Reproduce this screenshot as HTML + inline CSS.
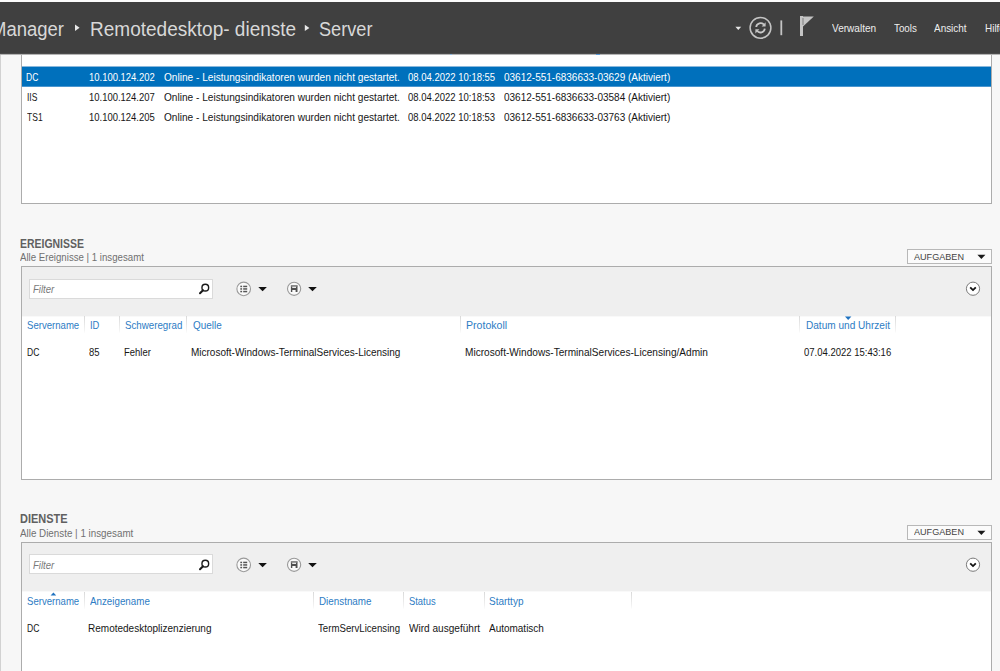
<!DOCTYPE html>
<html><head><meta charset="utf-8">
<style>
*{margin:0;padding:0;box-sizing:border-box}
html,body{width:1000px;height:671px;overflow:hidden;background:#f7f7f7;font-family:"Liberation Sans",sans-serif;position:relative}
.b{position:absolute}
.t{position:absolute;white-space:nowrap;transform-origin:0 0}
.sep{position:absolute;width:1px;background:linear-gradient(#d9d9d9,#f2f2f2 80%,#fdfdfd)}
</style></head><body>
<!-- left line -->
<div class="b" style="left:0;top:0;width:1px;height:671px;background:#d2d2d2"></div>

<!-- panel 1 -->
<div class="b" style="left:21px;top:30px;width:971px;height:174px;background:#fff;border:1px solid #acacac"></div>
<div class="b" style="left:22px;top:66px;width:969px;height:21px;background:linear-gradient(#8ab8dc 0,#8ab8dc 1px,#0070bc 1px,#0070bc 20px,#4a96cf 20px)"></div>

<!-- panel 2 -->
<div class="b" style="left:907px;top:249px;width:85px;height:15px;background:#fbfbfb;border:1px solid #b8b8b8"></div>
<div class="b" style="left:21px;top:266px;width:971px;height:214px;background:#fff;border:1px solid #acacac"></div>
<div class="b" style="left:22px;top:267px;width:969px;height:50px;background:linear-gradient(#efefef 0,#efefef 49px,#f9f9f9 49px)"></div>
<div class="b" style="left:29px;top:279px;width:184px;height:20px;background:#fff;border:1px solid #dadada"></div>

<!-- panel 3 -->
<div class="b" style="left:907px;top:525px;width:85px;height:15px;background:#fbfbfb;border:1px solid #b8b8b8"></div>
<div class="b" style="left:21px;top:542px;width:971px;height:140px;background:#fff;border:1px solid #acacac"></div>
<div class="b" style="left:22px;top:543px;width:969px;height:49px;background:linear-gradient(#efefef 0,#efefef 48px,#f9f9f9 48px)"></div>
<div class="b" style="left:29px;top:554px;width:184px;height:20px;background:#fff;border:1px solid #dadada"></div>

<!-- header separators -->
<div class="sep" style="left:84px;top:316px;height:17px"></div>
<div class="sep" style="left:119px;top:316px;height:17px"></div>
<div class="sep" style="left:186px;top:316px;height:17px"></div>
<div class="sep" style="left:460px;top:316px;height:17px"></div>
<div class="sep" style="left:799px;top:316px;height:17px"></div>
<div class="sep" style="left:895px;top:316px;height:17px"></div>
<div class="sep" style="left:84px;top:592px;height:17px"></div>
<div class="sep" style="left:313px;top:592px;height:17px"></div>
<div class="sep" style="left:403px;top:592px;height:17px"></div>
<div class="sep" style="left:484px;top:592px;height:17px"></div>
<div class="sep" style="left:631px;top:592px;height:17px"></div>

<!-- icons -->
<svg class="b" style="left:0;top:0" width="1000" height="671" viewBox="0 0 1000 671">
  <!-- toolbar icons panel 2 & 3 -->
  <g id="tbicons">
    <!-- search -->
    <circle cx="205.3" cy="287.65" r="3.35" fill="none" stroke="#1a1a1a" stroke-width="1.4"/>
    <line x1="203" y1="290.2" x2="200" y2="293.2" stroke="#1a1a1a" stroke-width="2" stroke-linecap="round"/>
    <!-- list circle -->
    <circle cx="243.7" cy="288.9" r="6.8" fill="#fafafa" stroke="#9a9a9a" stroke-width="1.1"/>
    <rect x="240.3" y="285.7" width="1.8" height="1.5" fill="#555"/>
    <rect x="240.3" y="288.2" width="1.8" height="1.5" fill="#555"/>
    <rect x="240.3" y="290.8" width="1.8" height="1.5" fill="#555"/>
    <rect x="243.2" y="285.7" width="4" height="1.5" fill="#555"/>
    <rect x="243.2" y="288.2" width="4" height="1.5" fill="#555"/>
    <rect x="243.2" y="290.8" width="4" height="1.5" fill="#555"/>
    <path d="M258.3 287 L266.9 287 L262.6 291.3 Z" fill="#111"/>
    <!-- save circle -->
    <circle cx="294.1" cy="288.8" r="6.6" fill="#fafafa" stroke="#9a9a9a" stroke-width="1.1"/>
    <rect x="290.9" y="285.4" width="6.6" height="6.6" fill="#505050"/><rect x="290.9" y="285.4" width="6.6" height="1.3" fill="#858585"/><rect x="292.2" y="286.7" width="3.8" height="1.2" fill="#fafafa"/><rect x="292.3" y="290" width="3.3" height="2" fill="#fafafa"/>
    <path d="M308.2 287 L316.8 287 L312.5 291.3 Z" fill="#111"/>
    <!-- expand -->
    <circle cx="973" cy="288.7" r="6.6" fill="#fff" stroke="#7a7a7a" stroke-width="1"/>
    <path d="M970.2 287.3 L973 290.1 L975.8 287.3" fill="none" stroke="#111" stroke-width="1.8"/>
    <!-- aufgaben triangle -->
    <path d="M977.4 254.7 L985.4 254.7 L981.4 258.9 Z" fill="#1a1a1a"/>
  </g>
  <use href="#tbicons" x="0" y="276"/>
  <!-- sort triangles -->
  <path d="M845 316.4 L851.4 316.4 L848.2 320 Z" fill="#1f72c0"/>
  <path d="M50.6 595.6 L56.2 595.6 L53.4 592.4 Z" fill="#1f72c0"/>
</svg>

<!-- top bar (over panel 1 top) -->
<div class="b" style="left:0;top:0;width:1000px;height:2px;background:#fcfcfc"></div>
<div class="b" style="left:0;top:2px;width:1000px;height:53px;background:linear-gradient(#404040 0,#404040 51px,#4c4c4c 51px,#4c4c4c 52px,#b4b4b4 52px)"></div>
<svg class="b" style="left:0;top:0" width="1000" height="53" viewBox="0 0 1000 53">
  <path d="M75 24.6 L79.6 27.8 L75 31 Z" fill="#e8e8e8"/>
  <path d="M304.8 24.7 L309.4 27.9 L304.8 31.1 Z" fill="#e8e8e8"/>
  <path d="M735.4 26.7 L741.2 26.7 L738.3 30 Z" fill="#e6e6e6"/>
  <circle cx="760.5" cy="27.8" r="10.4" fill="none" stroke="#c4c4c4" stroke-width="1.5"/>
  <path d="M756.2 27 A4.4 4.4 0 0 1 764 24.8" fill="none" stroke="#c8c8c8" stroke-width="1.8"/>
  <path d="M764.8 28.6 A4.4 4.4 0 0 1 757 30.8" fill="none" stroke="#c8c8c8" stroke-width="1.8"/>
  <path d="M765.6 22.2 L765.6 26.4 L761.6 26.4 Z" fill="#c4c4c4"/>
  <path d="M755.4 33.4 L755.4 29.2 L759.4 29.2 Z" fill="#c4c4c4"/>
  <rect x="780.4" y="20.4" width="1.8" height="14.8" fill="#c4c4c4"/>
  <rect x="800" y="16" width="3" height="20" fill="#c4c4c4"/>
  <path d="M803 16.5 L813.8 16.5 L803 26.5 Z" fill="#c4c4c4"/>
  <rect x="802.4" y="18" width="1.2" height="7" fill="#8a8a8a"/>
</svg>
<div class="b" style="left:450px;top:54px;width:2px;height:1px;background:#8fb8e0"></div><div class="b" style="left:596px;top:54px;width:4px;height:1px;background:#5a9ad6"></div>
<div class="t" style="left:-8.79px;top:18.00px;font-size:20px;line-height:22.344px;color:#d8d8d8;transform:scaleX(0.9250)">Manager</div>
<div class="t" style="left:89.50px;top:18.00px;font-size:20px;line-height:22.344px;color:#d8d8d8;transform:scaleX(0.9511)">Remotedesktop- dienste</div>
<div class="t" style="left:318.81px;top:18.00px;font-size:20px;line-height:22.344px;color:#d8d8d8;transform:scaleX(0.9084)">Server</div>
<div class="t" style="left:832.41px;top:22.00px;font-size:11px;line-height:12.289px;color:#eeeeee;transform:scaleX(0.9130)">Verwalten</div>
<div class="t" style="left:893.74px;top:22.00px;font-size:11px;line-height:12.289px;color:#eeeeee;transform:scaleX(0.8885)">Tools</div>
<div class="t" style="left:933.68px;top:22.00px;font-size:11px;line-height:12.289px;color:#eeeeee;transform:scaleX(0.9034)">Ansicht</div>
<div class="t" style="left:984.52px;top:22.00px;font-size:11px;line-height:12.289px;color:#eeeeee;transform:scaleX(0.9034)">Hilfe</div>
<div class="t" style="left:26.36px;top:72.00px;font-size:10.6px;line-height:11.842px;color:#ffffff;transform:scaleX(0.8037)">DC</div>
<div class="t" style="left:89.49px;top:72.00px;font-size:10.6px;line-height:11.842px;color:#ffffff;transform:scaleX(0.8930)">10.100.124.202</div>
<div class="t" style="left:163.64px;top:72.00px;font-size:10.6px;line-height:11.842px;color:#ffffff;transform:scaleX(0.9539)">Online - Leistungsindikatoren wurden nicht gestartet.</div>
<div class="t" style="left:408.48px;top:72.00px;font-size:10.6px;line-height:11.842px;color:#ffffff;transform:scaleX(0.8966)">08.04.2022 10:18:55</div>
<div class="t" style="left:504.20px;top:72.00px;font-size:10.6px;line-height:11.842px;color:#ffffff;transform:scaleX(0.9440)">03612-551-6836633-03629 (Aktiviert)</div>
<div class="t" style="left:26.76px;top:92.00px;font-size:10.6px;line-height:11.842px;color:#161616;transform:scaleX(0.8037)">IIS</div>
<div class="t" style="left:89.49px;top:92.00px;font-size:10.6px;line-height:11.842px;color:#161616;transform:scaleX(0.8930)">10.100.124.207</div>
<div class="t" style="left:163.64px;top:92.00px;font-size:10.6px;line-height:11.842px;color:#161616;transform:scaleX(0.9539)">Online - Leistungsindikatoren wurden nicht gestartet.</div>
<div class="t" style="left:408.48px;top:92.00px;font-size:10.6px;line-height:11.842px;color:#161616;transform:scaleX(0.8966)">08.04.2022 10:18:53</div>
<div class="t" style="left:504.20px;top:92.00px;font-size:10.6px;line-height:11.842px;color:#161616;transform:scaleX(0.9440)">03612-551-6836633-03584 (Aktiviert)</div>
<div class="t" style="left:26.76px;top:112.00px;font-size:10.6px;line-height:11.842px;color:#161616;transform:scaleX(0.8037)">TS1</div>
<div class="t" style="left:89.49px;top:112.00px;font-size:10.6px;line-height:11.842px;color:#161616;transform:scaleX(0.8930)">10.100.124.205</div>
<div class="t" style="left:163.64px;top:112.00px;font-size:10.6px;line-height:11.842px;color:#161616;transform:scaleX(0.9539)">Online - Leistungsindikatoren wurden nicht gestartet.</div>
<div class="t" style="left:408.48px;top:112.00px;font-size:10.6px;line-height:11.842px;color:#161616;transform:scaleX(0.8966)">08.04.2022 10:18:53</div>
<div class="t" style="left:504.20px;top:112.00px;font-size:10.6px;line-height:11.842px;color:#161616;transform:scaleX(0.9440)">03612-551-6836633-03763 (Aktiviert)</div>
<div class="t" style="left:20.38px;top:238.00px;font-size:12.4px;line-height:13.853px;color:#606060;font-weight:bold;transform:scaleX(0.8432)">EREIGNISSE</div>
<div class="t" style="left:20.42px;top:252.00px;font-size:10.5px;line-height:11.731px;color:#707070;transform:scaleX(0.9203)">Alle Ereignisse | 1 insgesamt</div>
<div class="t" style="left:914.33px;top:252.00px;font-size:9.6px;line-height:10.725px;color:#444444;transform:scaleX(0.9461)">AUFGABEN</div>
<div class="t" style="left:32.74px;top:284.00px;font-size:10.5px;line-height:11.731px;color:#7a7a7a;font-style:italic;transform:scaleX(0.9129)">Filter</div>
<div class="t" style="left:20.35px;top:513.00px;font-size:12.4px;line-height:13.853px;color:#606060;font-weight:bold;transform:scaleX(0.8855)">DIENSTE</div>
<div class="t" style="left:20.43px;top:528.00px;font-size:10.5px;line-height:11.731px;color:#707070;transform:scaleX(0.9349)">Alle Dienste | 1 insgesamt</div>
<div class="t" style="left:914.33px;top:527.00px;font-size:9.6px;line-height:10.725px;color:#444444;transform:scaleX(0.9461)">AUFGABEN</div>
<div class="t" style="left:32.74px;top:560.00px;font-size:10.5px;line-height:11.731px;color:#7a7a7a;font-style:italic;transform:scaleX(0.9129)">Filter</div>
<div class="t" style="left:27.45px;top:320.00px;font-size:10.6px;line-height:11.842px;color:#2d7cc4;transform:scaleX(0.9044)">Servername</div>
<div class="t" style="left:89.68px;top:320.00px;font-size:10.6px;line-height:11.842px;color:#2d7cc4;transform:scaleX(0.8837)">ID</div>
<div class="t" style="left:125.43px;top:320.00px;font-size:10.6px;line-height:11.842px;color:#2d7cc4;transform:scaleX(0.9180)">Schweregrad</div>
<div class="t" style="left:192.64px;top:320.00px;font-size:10.6px;line-height:11.842px;color:#2d7cc4;transform:scaleX(0.9371)">Quelle</div>
<div class="t" style="left:466.20px;top:320.00px;font-size:10.6px;line-height:11.842px;color:#2d7cc4;transform:scaleX(0.9995)">Protokoll</div>
<div class="t" style="left:805.51px;top:320.00px;font-size:10.6px;line-height:11.842px;color:#2d7cc4;transform:scaleX(0.9505)">Datum und Uhrzeit</div>
<div class="t" style="left:26.62px;top:347.00px;font-size:10.6px;line-height:11.842px;color:#161616;transform:scaleX(0.8098)">DC</div>
<div class="t" style="left:88.68px;top:347.00px;font-size:10.6px;line-height:11.842px;color:#161616;transform:scaleX(0.8922)">85</div>
<div class="t" style="left:124.30px;top:347.00px;font-size:10.6px;line-height:11.842px;color:#161616;transform:scaleX(0.8932)">Fehler</div>
<div class="t" style="left:191.26px;top:347.00px;font-size:10.6px;line-height:11.842px;color:#161616;transform:scaleX(0.9436)">Microsoft-Windows-TerminalServices-Licensing</div>
<div class="t" style="left:465.26px;top:347.00px;font-size:10.6px;line-height:11.842px;color:#161616;transform:scaleX(0.9530)">Microsoft-Windows-TerminalServices-Licensing/Admin</div>
<div class="t" style="left:804.23px;top:347.00px;font-size:10.6px;line-height:11.842px;color:#161616;transform:scaleX(0.8967)">07.04.2022 15:43:16</div>
<div class="t" style="left:27.45px;top:596.00px;font-size:10.6px;line-height:11.842px;color:#2d7cc4;transform:scaleX(0.9044)">Servername</div>
<div class="t" style="left:89.93px;top:596.00px;font-size:10.6px;line-height:11.842px;color:#2d7cc4;transform:scaleX(0.9239)">Anzeigename</div>
<div class="t" style="left:319.29px;top:596.00px;font-size:10.6px;line-height:11.842px;color:#2d7cc4;transform:scaleX(0.9291)">Dienstname</div>
<div class="t" style="left:409.45px;top:596.00px;font-size:10.6px;line-height:11.842px;color:#2d7cc4;transform:scaleX(0.8852)">Status</div>
<div class="t" style="left:489.16px;top:596.00px;font-size:10.6px;line-height:11.842px;color:#2d7cc4;transform:scaleX(0.9434)">Starttyp</div>
<div class="t" style="left:26.62px;top:623.00px;font-size:10.6px;line-height:11.842px;color:#161616;transform:scaleX(0.8098)">DC</div>
<div class="t" style="left:88.26px;top:623.00px;font-size:10.6px;line-height:11.842px;color:#161616;transform:scaleX(0.9447)">Remotedesktoplizenzierung</div>
<div class="t" style="left:317.75px;top:623.00px;font-size:10.6px;line-height:11.842px;color:#161616;transform:scaleX(0.9109)">TermServLicensing</div>
<div class="t" style="left:408.73px;top:623.00px;font-size:10.6px;line-height:11.842px;color:#161616;transform:scaleX(0.9499)">Wird ausgeführt</div>
<div class="t" style="left:488.93px;top:623.00px;font-size:10.6px;line-height:11.842px;color:#161616;transform:scaleX(0.9415)">Automatisch</div>
</body></html>
